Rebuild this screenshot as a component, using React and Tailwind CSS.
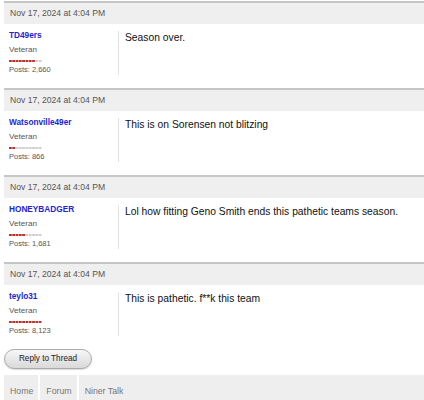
import React from "react";

const posts = [
  { user: "TD49ers", rep: 8, posts: "2,660", text: "Season over." },
  { user: "Watsonville49er", rep: 2, posts: "866", text: "This is on Sorensen not blitzing" },
  { user: "HONEYBADGER", rep: 5, posts: "1,681", text: "Lol how fitting Geno Smith ends this pathetic teams season." },
  { user: "teylo31", rep: 10, posts: "8,123", text: "This is pathetic. f**k this team" },
];

function RepBar({ n }) {
  const segs = [];
  for (let i = 0; i < 10; i++) {
    segs.push(
      <rect
        key={i}
        x={i * 3.3}
        y={0}
        width={2.8}
        height={2}
        fill={i < n ? "#c0302a" : "#cfcfcf"}
      />
    );
  }
  return (
    <svg className="block mt-[5px]" width="33" height="2" viewBox="0 0 33 2">
      {segs}
    </svg>
  );
}

function Post({ p }) {
  return (
    <div className="border-t-2 border-[#c6c6c6]">
      <div className="h-[21px] bg-[#efefef] pl-[6px] text-[8.6px] leading-[21px] text-[#555]">
        Nov 17, 2024 at 4:04 PM
      </div>
      <div className="flex pt-[7px] pb-[13px]">
        <div className="w-[115px] shrink-0 border-r border-[#e2e2e2] pl-[5px] h-[44px]">
          <div className="text-[8.25px] leading-[10px] font-bold text-[#2323d8]">{p.user}</div>
          <div className="mt-[4px] text-[8.1px] leading-[10px] text-[#555]">Veteran</div>
          <RepBar n={p.rep} />
          <div className="mt-[3px] text-[7.5px] leading-[10px] text-[#555]">Posts: {p.posts}</div>
        </div>
        <div className="pl-[6px] text-[10.3px] leading-[14px] text-[#111]">{p.text}</div>
      </div>
    </div>
  );
}

export default function App() {
  return (
    <div className="w-[424px] h-[400px] overflow-hidden bg-white font-['Liberation_Sans',Arial,sans-serif]">
      <div className="ml-[4px] mt-[1px]">
        {posts.map((p, i) => (
          <Post key={i} p={p} />
        ))}
        <button className="block h-[20px] w-[88px] rounded-full border border-[#ababab] bg-gradient-to-b from-[#f7f7f7] to-[#d9d9d9] text-[8.2px] text-[#222] shadow-[0_1px_1px_rgba(0,0,0,0.15)]">
          Reply to Thread
        </button>
        <div className="mt-[6px] flex h-[30px] bg-[#eeeeee] text-[8.75px] leading-[10px] text-[#777]">
          <div className="pl-[6px] pr-[5px] pt-[11px] border-r-2 border-white">Home</div>
          <div className="pl-[6px] pr-[5px] pt-[11px] border-r-2 border-white">Forum</div>
          <div className="pl-[6px] pr-[5px] pt-[11px]">Niner Talk</div>
        </div>
      </div>
    </div>
  );
}
